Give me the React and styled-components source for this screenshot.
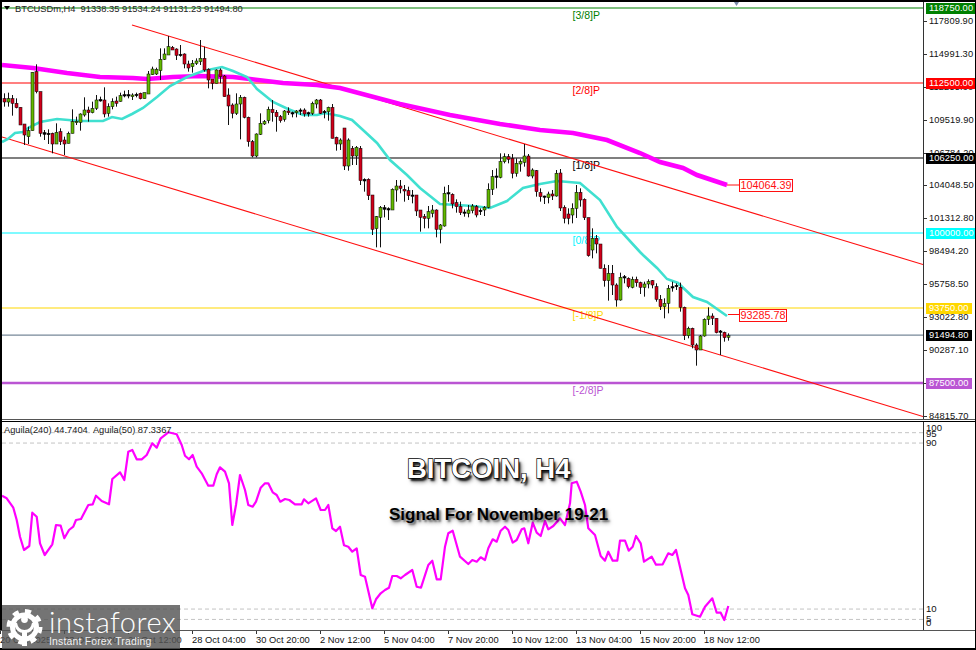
import styled, { createGlobalStyle } from "styled-components";

const GlobalStyle = createGlobalStyle`
  html, body {
    margin: 0;
    padding: 0;
    background: #000;
    overflow: hidden;
  }
`;

// price scale of the main pane: 75px for every 6250
const priceY = (p) => 8 + (118750 - p) / 83.3333;
// indicator scale: 0..100
const aguilaY = (v) => 629.8 - v * 2.075;

const LEVELS = [
  { price: 118750, color: "#008000", label: "[3/8]P", text: "118750.00", width: 1 },
  { price: 112500, color: "#ff0000", label: "[2/8]P", text: "112500.00", width: 1 },
  { price: 106250, color: "#000000", label: "[1/8]P", text: "106250.00", width: 1 },
  { price: 100000, color: "#00f5ff", label: "[0/8]P", text: "100000.00", width: 1 },
  { price: 93750, color: "#ffd700", label: "[-1/8]P", text: "93750.00", width: 1 },
  { price: 87500, color: "#ba55d3", label: "[-2/8]P", text: "87500.00", width: 2 },
];

const TICKS = [
  "117809.90", "114991.30", "112255.60", "109519.90", "106784.20", "104048.50",
  "101312.80", "98494.20", "95758.50", "93022.80", "90287.10", "87551.40", "84815.70",
];

const TIMES = [
  "20 Oct 2025", "23 Oct 20:00", "25 Oct 12:00", "28 Oct 04:00", "30 Oct 20:00", "2 Nov 12:00",
  "5 Nov 04:00", "7 Nov 20:00", "10 Nov 12:00", "13 Nov 04:00", "15 Nov 20:00", "18 Nov 12:00",
];

// centre of each scale figure, measured from the top of the indicator pane
const SCALE = [[100, 6], [95, 12], [90, 21], [10, 187], [5, 197], [0, 201]];

// candles were read off at 3x, so values are in thirds of a pixel: top, bottom, wickTop, wickBottom, kind
// kind: 0 down, 1 up, 2 doji
const CANDLES = [
  {
    x: 4,
    y: 0,
    rows: [
      [296,306,280,320,0],[296,306,278,320,1],[296,310,285,347,0],[310,323,295,325,0],[322,375,322,375,0],
      [372,405,372,435,0],[392,410,380,432,1],[217,392,217,392,1],[215,275,193,280,0],[275,400,275,410,0],
      [398,403,390,420,2],[400,404,388,432,2],[400,432,398,460,0],[397,432,370,432,1],[395,425,385,435,0],
      [420,432,410,465,0],[400,430,395,430,1],[365,400,328,400,1],[364,368,350,375,1],[342,367,340,392,1],
      [330,345,292,350,1],[330,338,320,365,0],[325,338,305,340,1],[300,325,285,330,1],[298,303,290,305,2],
      [300,342,262,352,0],[320,340,310,350,1],[305,320,295,328,1],[303,310,290,320,0],[287,304,278,305,1],
      [284,288,272,292,2],[284,288,270,295,2],[285,290,280,300,1],[283,287,278,292,2],[280,296,278,298,0],
      [278,296,278,296,1],[222,282,213,282,1],[207,224,200,225,1],[208,222,203,225,1],[178,212,145,240,1],
      [162,178,145,180,1],[140,165,108,165,1],[142,150,138,150,0],[147,166,145,180,0],[163,167,135,170,2],
      [162,192,160,205,0],[192,204,182,215,0],[190,200,180,218,1],[183,190,175,195,1],[175,185,120,195,1],
      [175,210,140,215,0],[208,240,205,265,0],[237,250,237,268,0],[210,250,208,250,1],[210,230,205,250,0],
      [228,290,225,290,0],[285,318,265,375,0],[315,340,310,355,0],[312,340,280,345,1],[292,312,285,418,1],
      [292,352,290,355,0],[352,425,350,440,0],[425,468,420,472,0],[402,468,400,472,1],[370,403,340,405,1],
      [365,372,360,375,1],[328,362,320,370,1],[328,338,300,365,0],[337,350,330,395,0],[350,362,345,368,0],
      [333,358,330,365,1],[333,338,322,345,0],[338,342,335,352,2],[333,338,330,352,1],[330,334,325,345,2],
      [330,342,325,350,0],[338,342,335,350,2],[310,340,305,345,1],[300,312,297,325,1],[300,340,297,342,0],
      [334,338,330,355,2],[322,335,320,362,1],[322,415,312,415,0],[412,432,410,452,0],
    ],
  },
  {
    x: 340,
    y: 130,
    rows: [
      [30,42,25,60,1],[-6,108,-6,120,0],[30,108,25,122,1],[55,78,48,105,0],[52,78,48,105,1],
      [55,152,48,165,0],[148,153,145,185,2],[148,197,145,210,0],[195,298,195,315,0],[260,296,258,352,1],
      [232,262,228,352,1],[233,238,225,262,2],[236,240,232,270,2],[178,240,175,240,1],[168,180,150,215,1],
      [168,175,150,190,0],[178,183,165,215,0],[182,197,170,210,0],[195,199,180,220,2],[195,243,195,258,0],
      [240,262,240,305,0],[260,265,252,295,0],[245,265,228,295,1],[240,250,225,262,1],[240,298,238,322,0],
      [285,298,282,340,1],[190,288,170,290,1],[188,192,165,215,2],[193,222,190,235,0],[218,230,208,248,0],
      [230,248,215,255,0],[246,250,238,260,2],[240,250,225,262,1],[228,242,222,250,1],[230,255,225,262,0],
      [241,245,235,255,2],[232,240,228,258,1],[178,232,160,235,1],[140,178,120,195,1],[138,142,115,175,2],
      [95,142,70,145,1],[80,95,70,100,1],[80,88,72,100,0],[85,130,72,145,0],[100,130,85,140,1],
      [95,102,88,125,1],[78,97,42,110,1],[78,138,72,140,0],[120,138,115,145,1],[122,185,120,200,0],
      [188,200,175,215,0],[198,202,197,222,2],[192,203,185,220,1],[192,198,180,210,0],[130,198,120,200,1],
    ],
  },
  {
    x: 560,
    y: 170,
    rows: [
      [9,114,-3,123,0],[112,145,106,160,0],[132,145,115,163,0],[115,135,100,160,1],[67,115,45,144,1],
      [67,90,55,110,0],[88,143,85,150,0],[143,257,143,260,0],[205,240,175,265,1],[205,222,195,250,0],
      [222,295,222,295,0],[295,332,283,350,0],[310,332,285,392,1],[310,345,285,375,0],[345,390,340,410,0],
      [322,390,308,392,1],[320,324,315,340,2],[325,350,322,355,0],[328,352,320,355,1],[328,338,320,350,0],
      [338,352,335,372,0],[342,352,335,380,1],[335,342,328,355,1],[332,345,330,355,0],[350,388,340,395,0],
      [388,410,375,420,0],[400,410,385,445,1],[355,400,345,430,1],[350,354,335,365,2],[346,350,340,360,2],
      [352,412,338,425,0],[412,497,410,510,0],[475,497,470,505,1],[475,525,473,535,0],[525,540,520,587,0],
      [498,540,495,540,1],[448,498,445,500,1],[438,448,412,465,1],[438,445,430,465,0],[445,488,445,490,0],
      [483,487,480,555,2],[487,503,485,515,0],[497,502,490,512,1],
    ],
  },
].flatMap((g) =>
  g.rows.map((r, i) => ({
    x: g.x + i * 4,
    top: g.y + r[0] / 3,
    bottom: g.y + r[1] / 3,
    high: g.y + r[2] / 3,
    low: g.y + r[3] / 3,
    kind: r[4],
  }))
);

const MA_SLOW = "2,65 33,68 67,73 100,77 133,78 147,79 173,77 200,76 233,77 250,79 283,83 317,85 340,88 400,104 450,115 500,124 540,130 573,133 607,140 640,153 660,162 683,168 697,175 727,185";

const MA_FAST = "2,142 8,139 15,133 23,132 28,128 40,122 57,119 80,121 103,121 112,117 122,119 132,114 143,108 157,97 170,86 187,77 203,71 222,67 233,71 247,77 257,89 273,102 288,109 303,115 317,115 325,113 340,116 352,120 363,130 377,143 390,160 407,175 420,188 440,204 457,205 473,206 490,208 507,201 523,188 540,184 557,181 580,183 600,200 617,227 640,252 643,255 657,268 667,279 678,283 693,297 707,302 727,316";

const toPoints = (list, x0, y0) =>
  list.map(([x, y]) => `${(x0 + x / 3).toFixed(1)},${(y0 + y / 3).toFixed(1)}`).join(" ");

const AGUILA =
  toPoints([[6,242],[20,250],[40,278],[50,315],[60,365],[72,405],[88,393],[97,293],[110,305],[120,385],[134,420],[157,388],[168,330],[182,332],[193,370],[207,345],[220,335],[228,315],[243,312],[265,270],[278,268],[288,242],[305,258],[327,268],[337,192],[360,172],[373,195],[385,110],[397,105],[410,133],[425,133],[440,120],[457,85],[470,98],[482,70],[505,52],[530,58],[545,90],[555,122],[567,133],[578,120],[590,155],[605,175],[625,212],[640,212],[650,178],[660,157],[675,170],[687,205],[697,330],[708,270],[720,180],[735,225],[745,270],[758,275],[768,260],[782,218],[795,205],[805,205],[818,232],[830,240],[841,260],[855,252],[868,255],[885,268],[905,268],[912,253],[925,265],[948,250],[962,285],[975,285],[985,270],[997,340],[1008,348],[1020,335]], 0, 415) +
  " " +
  toPoints([[12,316],[25,320],[37,335],[50,325],[62,405],[75,410],[97,505],[108,478],[122,460],[135,450],[147,443],[157,408],[170,408],[182,415],[195,405],[217,390],[230,440],[243,443],[265,375],[277,362],[290,418],[302,418],[315,320],[325,280],[338,272],[360,350],[385,372],[397,360],[410,365],[422,352],[435,360],[445,325],[458,298],[470,305],[482,272],[495,260],[505,270],[518,308],[530,300],[545,268],[553,265],[565,310],[578,248],[590,278],[602,288],[615,243],[625,268],[640,258],[660,235],[675,255],[690,190],[695,130],[710,125],[722,155],[735,195],[745,265],[765,285],[782,348],[795,362],[805,335],[818,362],[832,362],[840,302],[855,302],[866,332],[878,320],[888,288],[902,310],[912,365],[935,350],[948,374],[968,373],[985,340],[997,345],[1008,330],[1035,445],[1045,465],[1057,523],[1080,530],[1095,500],[1117,475],[1130,518],[1142,518],[1153,540],[1165,498]], 340, 440);

const CANDLE_COLORS = ["#d0001a", "#62b800", "#000"];

const Candle = ({ c }) => (
  <g>
    <line x1={c.x + 0.5} x2={c.x + 0.5} y1={c.high} y2={c.low} stroke="#111" strokeWidth="1" />
    <rect
      x={c.x - 1}
      y={c.top}
      width="3"
      height={Math.max(c.bottom - c.top, 1)}
      fill={CANDLE_COLORS[c.kind]}
      stroke="#000"
      strokeWidth="0.5"
    />
  </g>
);

const MainChart = () => (
  <PlotSvg $height={417} viewBox="2 2 921 417">
    {LEVELS.map((l) => (
      <line
        key={l.price}
        x1="2"
        x2="923"
        y1={priceY(l.price)}
        y2={priceY(l.price)}
        stroke={l.color}
        strokeWidth={l.width * 1.2}
      />
    ))}
    <line x1="2" x2="923" y1={priceY(91494.8)} y2={priceY(91494.8)} stroke="#778899" strokeWidth="1.2" />
    {LEVELS.map((l) => (
      <LevelText key={l.label} x="572.5" y={priceY(l.price) + 11} fill={l.color}>
        {l.label}
      </LevelText>
    ))}
    <line x1="132" y1="25" x2="923" y2="264.5" stroke="#ff1010" strokeWidth="1.1" />
    <line x1="2" y1="137" x2="923" y2="416.5" stroke="#ff1010" strokeWidth="1.1" />
    <polyline points={MA_SLOW} fill="none" stroke="#ff00ff" strokeWidth="4.6" />
    <polyline points={MA_FAST} fill="none" stroke="#40e0d0" strokeWidth="2.6" />
    {CANDLES.map((c) => (
      <Candle key={c.x} c={c} />
    ))}
    <line x1="727" y1="185" x2="739" y2="185" stroke="#ff1010" strokeWidth="1" />
    <line x1="728" y1="314.5" x2="739" y2="314.5" stroke="#ff1010" strokeWidth="1" />
    <polygon points="734,2 739,2 736.5,6" fill="#7a8aa8" />
    <polygon points="4,6 10,6 7,10" fill="#000" />
  </PlotSvg>
);

const IndicatorChart = () => (
  <PlotSvg $height={207} viewBox="2 422 921 207">
    {[95, 90, 10, 5].map((v) => (
      <line
        key={v}
        x1="2"
        x2="923"
        y1={aguilaY(v)}
        y2={aguilaY(v)}
        stroke="#c4c4c4"
        strokeWidth="1"
        strokeDasharray="4 3"
      />
    ))}
    <polyline points={AGUILA} fill="none" stroke="#ff00ff" strokeWidth="2.2" strokeLinejoin="round" />
  </PlotSvg>
);

const LogoGear = () => (
  <svg width="37" height="38" viewBox="0 0 37 38">
    <circle cx="18.5" cy="19" r="16" fill="none" stroke="#fff" strokeWidth="4" strokeDasharray="6.2 6.36" />
    <circle cx="18.5" cy="19" r="12" fill="none" stroke="#fff" strokeWidth="5" />
    <circle cx="18.5" cy="11.5" r="3.4" fill="#fff" />
    <path d="M9.5 15 C10.5 21 14 23.5 18.5 23.5 C23 23.5 26.5 21 27.5 15" fill="none" stroke="#fff" strokeWidth="3" />
    <rect x="16" y="22" width="5" height="16" fill="#fff" />
  </svg>
);

export default function App() {
  return (
    <>
      <GlobalStyle />
      <Screen>
        <Pane $height={417}>
          <MainChart />
          <PriceAxis>
            <TickColumn>
              {TICKS.map((t) => (
                <AxisTick key={t}>{t}</AxisTick>
              ))}
            </TickColumn>
            {LEVELS.map((l) => (
              <Badge key={l.text} $bg={l.color === "#00f5ff" ? "#00ffff" : l.color} style={{ top: priceY(l.price) - 7.5 }}>
                {l.text}
              </Badge>
            ))}
            <Badge $bg="#000" style={{ top: priceY(91494.8) - 7.5 }}>
              91494.80
            </Badge>
          </PriceAxis>
          <SymbolInfo>BTCUSDm,H4&nbsp; 91338.35 91534.24 91131.23 91494.80</SymbolInfo>
          <PriceTag $top={177} $left={737}>104064.39</PriceTag>
          <PriceTag $top={307} $left={737}>93285.78</PriceTag>
        </Pane>
        <Splitter />
        <Pane $height={208}>
          <IndicatorChart />
          <PriceAxis>
            {SCALE.map(([v, center]) => (
              <ScaleMark key={v} style={{ top: center - 5 }}>
                {v}
              </ScaleMark>
            ))}
          </PriceAxis>
          <IndicatorInfo>Aguila(240) 44.7404 &nbsp;Aguila(50) 87.3367</IndicatorInfo>
        </Pane>
        <TimeAxis>
          {TIMES.map((t) => (
            <TimeMark key={t}>{t}</TimeMark>
          ))}
        </TimeAxis>
        <Caption>
          <Headline>BITCOIN, H4</Headline>
          <Subline>Signal For November 19-21</Subline>
        </Caption>
        <Logo>
          <LogoGear />
          <LogoWords>
            <LogoName>instaforex</LogoName>
            <LogoSlogan>Instant Forex Trading</LogoSlogan>
          </LogoWords>
        </Logo>
      </Screen>
    </>
  );
}

const Screen = styled.div`
  position: relative;
  box-sizing: border-box;
  width: 976px;
  height: 650px;
  padding: 2px 1px 2px 2px;
  background: #000;
  display: flex;
  flex-direction: column;
  font-family: "Liberation Sans", Arial, sans-serif;
  overflow: hidden;
`;

const Pane = styled.div`
  position: relative;
  display: flex;
  height: ${(props) => props.$height}px;
  background: #fff;
`;

const PlotSvg = styled.svg`
  display: block;
  width: 921px;
  height: ${(props) => props.$height}px;
  flex: none;
`;

const LevelText = styled.text`
  font-family: "Liberation Sans", Arial, sans-serif;
  font-size: 10.5px;
`;

const PriceAxis = styled.div`
  position: relative;
  flex: 1;
  border-left: 1px solid #333;
  overflow: hidden;
`;

const TickColumn = styled.div`
  display: flex;
  flex-direction: column;
  padding-top: 2.5px;
`;

const AxisTick = styled.div`
  position: relative;
  flex: none;
  height: 32.92px;
  display: flex;
  align-items: center;
  padding-left: 5px;
  font-size: 9.3px;
  letter-spacing: 0.1px;
  color: #111;

  &::before {
    content: "";
    position: absolute;
    left: 0;
    top: 50%;
    width: 3px;
    height: 1px;
    background: #333;
  }
`;

const Badge = styled.div`
  position: absolute;
  left: 2px;
  height: 11px;
  line-height: 11px;
  padding: 0 3px;
  font-size: 9.3px;
  letter-spacing: 0.1px;
  color: #fff;
  background: ${(props) => props.$bg};
`;

const ScaleMark = styled.div`
  position: absolute;
  left: 2px;
  line-height: 10px;
  font-size: 9.6px;
  color: #111;
`;

const SymbolInfo = styled.div`
  position: absolute;
  left: 13px;
  top: 2px;
  font-size: 9.3px;
  line-height: 11px;
  color: #222;
  white-space: nowrap;
`;

const IndicatorInfo = styled.div`
  position: absolute;
  left: 2px;
  top: 3px;
  font-size: 9.3px;
  line-height: 11px;
  color: #222;
  white-space: nowrap;
`;

const PriceTag = styled.div`
  position: absolute;
  left: ${(props) => props.$left}px;
  top: ${(props) => props.$top}px;
  height: 11px;
  line-height: 11px;
  padding: 0 0.5px;
  font-size: 10.8px;
  color: #ff1010;
  background: #fff;
  border: 1px solid #ff1010;
`;

const Splitter = styled.div`
  height: 3px;
  flex: none;
  box-sizing: border-box;
  border-top: 1px solid #555;
  border-bottom: 1px solid #000;
  background: #fff;
`;

const TimeAxis = styled.div`
  flex: 1;
  display: grid;
  grid-template-columns: repeat(auto-fill, 64px);
  margin-left: -3px;
  padding-top: 3px;
  background: #fff;
  border-top: 1px solid #555;
`;

const TimeMark = styled.div`
  position: relative;
  padding-left: 1px;
  font-size: 9.3px;
  line-height: 12px;
  letter-spacing: 0.05px;
  color: #111;
  white-space: nowrap;

  &::before {
    content: "";
    position: absolute;
    left: 1px;
    top: -3px;
    width: 1px;
    height: 3px;
    background: #333;
  }
`;

const Caption = styled.div`
  position: absolute;
  left: 389px;
  top: 453px;
  display: flex;
  flex-direction: column;
  align-items: flex-start;
  gap: 20px;
  white-space: nowrap;
`;

const Headline = styled.div`
  margin-left: 18px;
  font-size: 27.5px;
  line-height: 32px;
  font-weight: 700;
  color: #fff;
  -webkit-text-stroke: 1.4px #000;
  paint-order: stroke fill;
  text-shadow: 2px 3px 2px rgba(0, 0, 0, 0.85), 3px 4px 4px rgba(0, 0, 0, 0.5);
`;

const Subline = styled.div`
  font-size: 17px;
  line-height: 20px;
  font-weight: 700;
  color: #000;
  text-shadow: 2px 2px 2px rgba(0, 0, 0, 0.45), 2px 3px 4px rgba(0, 0, 0, 0.4);
`;

const Logo = styled.div`
  position: absolute;
  left: 2px;
  top: 605px;
  width: 178px;
  height: 44px;
  box-sizing: border-box;
  display: flex;
  align-items: flex-start;
  gap: 6px;
  padding: 3px 0 0 4px;
  background: rgba(85, 85, 85, 0.82);
  color: #fff;
`;

const LogoWords = styled.div`
  display: flex;
  flex-direction: column;
`;

const LogoName = styled.div`
  font-family: Lato, sans-serif;
  font-weight: 300;
  font-size: 29px;
  line-height: 28px;
  letter-spacing: 0.5px;
`;

const LogoSlogan = styled.div`
  font-size: 10.4px;
  line-height: 12px;
  letter-spacing: 0.2px;
  opacity: 0.9;
`;
